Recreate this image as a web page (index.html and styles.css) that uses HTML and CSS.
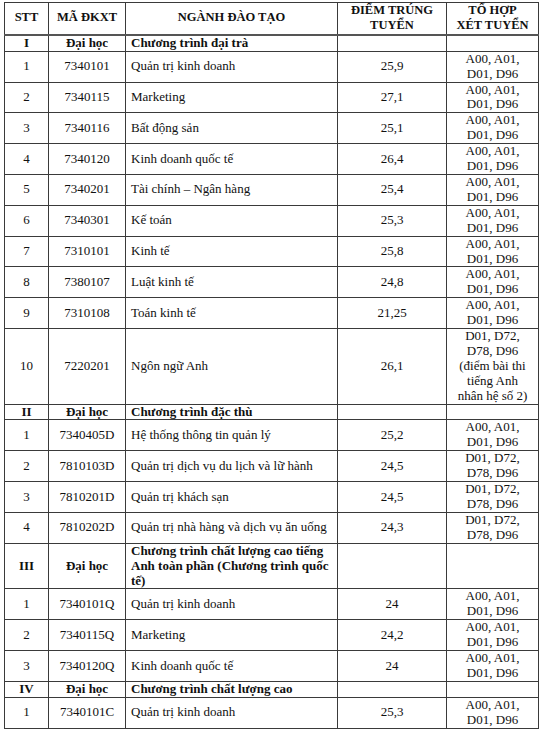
FILE: index.html
```html
<!DOCTYPE html>
<html lang="vi">
<head>
<meta charset="utf-8">
<link rel="stylesheet" href="styles.css">
</head>
<body>
<table class="tbl">
  <colgroup>
    <col class="c-stt"><col class="c-ma"><col class="c-nganh"><col class="c-diem"><col class="c-to">
  </colgroup>
  <thead>
    <tr class="head">
      <th>STT</th><th>MÃ ĐKXT</th><th>NGÀNH ĐÀO TẠO</th><th>ĐIỂM TRÚNG<br>TUYỂN</th><th>TỔ HỢP<br>XÉT TUYỂN</th>
    </tr>
  </thead>
  <tbody>
    <tr class="sec"><td>I</td><td>Đại học</td><td class="name">Chương trình đại trà</td><td></td><td></td></tr>
    <tr><td>1</td><td>7340101</td><td class="name">Quản trị kinh doanh</td><td>25,9</td><td>A00, A01,<br>D01, D96</td></tr>
    <tr><td>2</td><td>7340115</td><td class="name">Marketing</td><td>27,1</td><td>A00, A01,<br>D01, D96</td></tr>
    <tr><td>3</td><td>7340116</td><td class="name">Bất động sản</td><td>25,1</td><td>A00, A01,<br>D01, D96</td></tr>
    <tr><td>4</td><td>7340120</td><td class="name">Kinh doanh quốc tế</td><td>26,4</td><td>A00, A01,<br>D01, D96</td></tr>
    <tr><td>5</td><td>7340201</td><td class="name">Tài chính – Ngân hàng</td><td>25,4</td><td>A00, A01,<br>D01, D96</td></tr>
    <tr><td>6</td><td>7340301</td><td class="name">Kế toán</td><td>25,3</td><td>A00, A01,<br>D01, D96</td></tr>
    <tr><td>7</td><td>7310101</td><td class="name">Kinh tế</td><td>25,8</td><td>A00, A01,<br>D01, D96</td></tr>
    <tr><td>8</td><td>7380107</td><td class="name">Luật kinh tế</td><td>24,8</td><td>A00, A01,<br>D01, D96</td></tr>
    <tr><td>9</td><td>7310108</td><td class="name">Toán kinh tế</td><td>21,25</td><td>A00, A01,<br>D01, D96</td></tr>
    <tr><td>10</td><td>7220201</td><td class="name">Ngôn ngữ Anh</td><td>26,1</td><td>D01, D72,<br>D78, D96<br>(điểm bài thi<br>tiếng Anh<br>nhân hệ số 2)</td></tr>
    <tr class="sec"><td>II</td><td>Đại học</td><td class="name">Chương trình đặc thù</td><td></td><td></td></tr>
    <tr><td>1</td><td>7340405D</td><td class="name">Hệ thống thông tin quản lý</td><td>25,2</td><td>A00, A01,<br>D01, D96</td></tr>
    <tr><td>2</td><td>7810103D</td><td class="name">Quản trị dịch vụ du lịch và lữ hành</td><td>24,5</td><td>D01, D72,<br>D78, D96</td></tr>
    <tr><td>3</td><td>7810201D</td><td class="name">Quản trị khách sạn</td><td>24,5</td><td>D01, D72,<br>D78, D96</td></tr>
    <tr><td>4</td><td>7810202D</td><td class="name">Quản trị nhà hàng và dịch vụ ăn uống</td><td>24,3</td><td>D01, D72,<br>D78, D96</td></tr>
    <tr class="sec"><td>III</td><td>Đại học</td><td class="name">Chương trình chất lượng cao tiếng Anh toàn phần (Chương trình quốc tế)</td><td></td><td></td></tr>
    <tr><td>1</td><td>7340101Q</td><td class="name">Quản trị kinh doanh</td><td>24</td><td>A00, A01,<br>D01, D96</td></tr>
    <tr><td>2</td><td>7340115Q</td><td class="name">Marketing</td><td>24,2</td><td>A00, A01,<br>D01, D96</td></tr>
    <tr><td>3</td><td>7340120Q</td><td class="name">Kinh doanh quốc tế</td><td>24</td><td>A00, A01,<br>D01, D96</td></tr>
    <tr class="sec"><td>IV</td><td>Đại học</td><td class="name">Chương trình chất lượng cao</td><td></td><td></td></tr>
    <tr><td>1</td><td>7340101C</td><td class="name">Quản trị kinh doanh</td><td>25,3</td><td>A00, A01,<br>D01, D96</td></tr>
  </tbody>
</table>
</body>
</html>
```
FILE: styles.css
```css
html, body {
  margin: 0;
  background: #ffffff;
}
body {
  padding: 2px 2px 0 4px;
  font-family: "Liberation Serif", "Times New Roman", serif;
  font-size: 13px;
  line-height: 14.9px;
  color: #111;
}
.tbl {
  width: 534px;
  border-collapse: collapse;
  table-layout: fixed;
}
.c-stt { width: 44px; }
.c-ma { width: 77px; }
.c-nganh { width: 212px; }
.c-diem { width: 109px; }
.c-to { width: 92px; }
.tbl th, .tbl td {
  border: 1px solid #3a3a3a;
  padding: 0;
  text-align: center;
  vertical-align: middle;
  font-weight: normal;
}
.tbl th {
  font-weight: bold;
  font-size: 12.5px;
  padding-bottom: 1px;
}
.head th {
  border-bottom: 2px solid #555;
}
.tbl td.name {
  text-align: left;
  padding-left: 5px;
}
.sec td {
  font-weight: bold;
}
.sec td.name {
  padding-right: 4px;
}
```
